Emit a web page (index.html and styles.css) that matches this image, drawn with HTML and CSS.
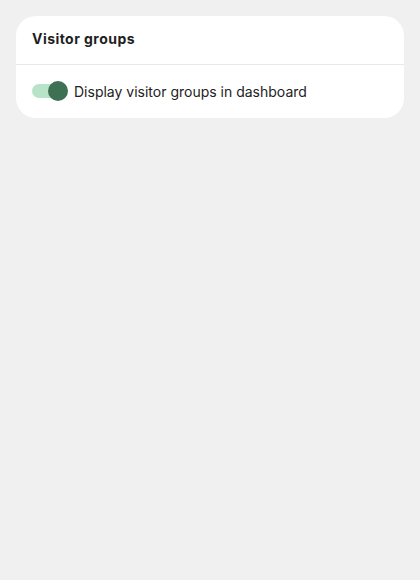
FILE: index.html
```html
<!DOCTYPE html>
<html>
<head>
<meta charset="utf-8">
<link rel="stylesheet" href="styles.css">
</head>
<body>
<div class="card">
  <div class="card-header">Visitor groups</div>
  <div class="card-body">
    <label class="toggle-row">
      <span class="toggle"><span class="thumb"></span></span>
      <span class="label">Display visitor groups in dashboard</span>
    </label>
  </div>
</div>
</body>
</html>
```

FILE: styles.css
```css
html, body { margin: 0; padding: 0; }
body {
  background: #f0f0f0;
  font-family: Inter, "Noto Sans", sans-serif;
  color: #1f1f1f;
  padding: 16px;
}
.card {
  background: #fff;
  border-radius: 20px;
  width: 388px;
  overflow: hidden;
}
.card-header {
  height: 49px;
  box-sizing: border-box;
  padding: 0 16px 3px;
  display: flex;
  align-items: center;
  font-weight: 700;
  font-size: 14px;
  letter-spacing: 0.45px;
  border-bottom: 1px solid #e6e8ea;
}
.card-body {
  padding: 15px 16px 16px;
}
.toggle-row {
  display: flex;
  align-items: center;
  gap: 6px;
  height: 22px;
}
.toggle {
  position: relative;
  width: 36px;
  height: 22px;
  display: inline-block;
}
.toggle::before {
  content: "";
  position: absolute;
  left: 0;
  top: 4px;
  width: 32px;
  height: 14px;
  border-radius: 7px;
  background: #b7e3c9;
}
.thumb {
  position: absolute;
  left: 16px;
  top: 1px;
  width: 20px;
  height: 20px;
  border-radius: 50%;
  background: #3e7154;
}
.label {
  font-size: 14px;
  color: #222;
}
```
